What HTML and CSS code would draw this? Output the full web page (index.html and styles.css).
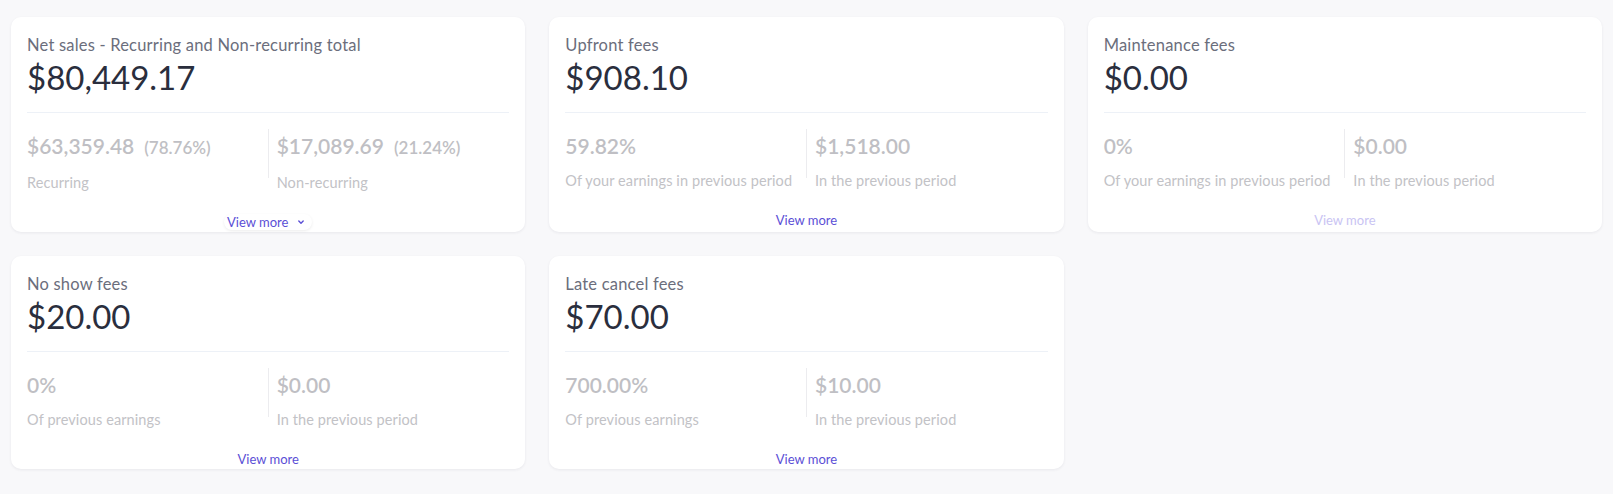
FILE: index.html
```html
<!DOCTYPE html>
<html lang="en">
<head>
    <meta charset="UTF-8">
    <title>Sales overview</title>
    <link rel="stylesheet" href="styles.css">
</head>
<body>
<main class="cards">
    <!--net sales-->
    <section class="card">
        <div class="card-head">
            <h3 class="card-title">Net sales - Recurring and Non-recurring total</h3>
            <div class="card-amount">$80,449.17</div>
        </div>
        <div class="stats">
            <div class="stat">
                <div class="stat-value">$63,359.48<span class="stat-pct">(78.76%)</span></div>
                <div class="stat-label">Recurring</div>
            </div>
            <div class="stat-sep"></div>
            <div class="stat">
                <div class="stat-value">$17,089.69<span class="stat-pct">(21.24%)</span></div>
                <div class="stat-label">Non-recurring</div>
            </div>
        </div>
        <div class="card-foot">
            <a class="view-more view-more-drop" href="javascript:;">View more
                <svg width="16" height="16" viewBox="0 0 16 16"><path d="M5.8 7 L8 9.2 L10.2 7" fill="none" stroke="currentColor" stroke-width="1.4" stroke-linecap="round" stroke-linejoin="round"/></svg>
            </a>
        </div>
    </section>

    <section class="card">
        <div class="card-head">
            <h3 class="card-title">Upfront fees</h3>
            <div class="card-amount">$908.10</div>
        </div>
        <div class="stats">
            <div class="stat">
                <div class="stat-value">59.82%</div>
                <div class="stat-label">Of your earnings in previous period</div>
            </div>
            <div class="stat-sep"></div>
            <div class="stat">
                <div class="stat-value">$1,518.00</div>
                <div class="stat-label">In the previous period</div>
            </div>
        </div>
        <div class="card-foot">
            <a class="view-more" href="javascript:;">View more</a>
        </div>
    </section>

    <section class="card">
        <div class="card-head">
            <h3 class="card-title">Maintenance fees</h3>
            <div class="card-amount">$0.00</div>
        </div>
        <div class="stats">
            <div class="stat">
                <div class="stat-value">0%</div>
                <div class="stat-label">Of your earnings in previous period</div>
            </div>
            <div class="stat-sep"></div>
            <div class="stat">
                <div class="stat-value">$0.00</div>
                <div class="stat-label">In the previous period</div>
            </div>
        </div>
        <div class="card-foot">
            <!--没有数据时禁用-->
            <a class="view-more disabled" href="javascript:;">View more</a>
        </div>
    </section>

    <section class="card">
        <div class="card-head">
            <h3 class="card-title">No show fees</h3>
            <div class="card-amount">$20.00</div>
        </div>
        <div class="stats">
            <div class="stat">
                <div class="stat-value">0%</div>
                <div class="stat-label">Of previous earnings</div>
            </div>
            <div class="stat-sep"></div>
            <div class="stat">
                <div class="stat-value">$0.00</div>
                <div class="stat-label">In the previous period</div>
            </div>
        </div>
        <div class="card-foot">
            <a class="view-more" href="javascript:;">View more</a>
        </div>
    </section>

    <section class="card">
        <div class="card-head">
            <h3 class="card-title">Late cancel fees</h3>
            <div class="card-amount">$70.00</div>
        </div>
        <div class="stats">
            <div class="stat">
                <div class="stat-value">700.00%</div>
                <div class="stat-label">Of previous earnings</div>
            </div>
            <div class="stat-sep"></div>
            <div class="stat">
                <div class="stat-value">$10.00</div>
                <div class="stat-label">In the previous period</div>
            </div>
        </div>
        <div class="card-foot">
            <a class="view-more" href="javascript:;">View more</a>
        </div>
    </section>
</main>
</body>
</html>
```

FILE: styles.css
```css
*{
    margin: 0;
    padding: 0;
    box-sizing: border-box;
}
body{
    background-color: #f8f8fa;
    font-family: Lato, "Liberation Sans", sans-serif;
}
.cards{
    display: grid;
    grid-template-columns: repeat(3, 1fr);
    gap: 24px;
    padding: 17px 11px;
}
.card{
    display: flex;
    flex-direction: column;
    background-color: #fff;
    border-radius: 10px;
    box-shadow: 0 1px 3px rgba(30, 35, 60, 0.07);
    padding: 18px 16px 2px;
}
/*标题和总额*/
.card-head{
    padding-bottom: 15px;
    border-bottom: 1px solid #edf1f7;
}
.card-title{
    font-size: 16.5px;
    line-height: 20px;
    font-weight: 400;
    letter-spacing: 0.2px;
    color: #6b6e7c;
}
.card-amount{
    margin-top: 2px;
    font-size: 33px;
    line-height: 40px;
    color: #2a2e3d;
}
/*两列数据，两边留出8px*/
.stats{
    display: flex;
    margin-top: 17px;
}
.stat{
    flex: 1 1 0;
    padding-right: 8px;
}
.stat-sep + .stat{
    padding-right: 0;
    padding-left: 8px;
}
.stat-sep{
    width: 1px;
    height: 49px;
    margin-top: -1px;
    background-color: #ececef;
}
.stat-value{
    font-size: 21px;
    line-height: 32px;
    font-weight: 600;
    color: #bfbfc4;
}
.stat-pct{
    margin-left: 10px;
    font-size: 17px;
}
.stat-label{
    margin-top: 9px;
    font-size: 14.5px;
    line-height: 20px;
    letter-spacing: 0.1px;
    color: #c2c2c6;
}
/*查看更多*/
.card-foot{
    display: flex;
    justify-content: center;
    margin-top: 21px;
}
.view-more{
    display: flex;
    align-items: center;
    height: 16px;
    font-size: 13px;
    line-height: 16px;
    color: #5b4fd6;
    text-decoration: none;
}
.view-more-drop{
    padding: 0 3px;
    border-radius: 8px;
    box-shadow: 0 1px 3px rgba(0, 0, 0, 0.08);
}
.view-more-drop svg{
    margin-left: 5px;
}
.view-more.disabled{
    color: #c9c4f3;
    cursor: default;
}
```
